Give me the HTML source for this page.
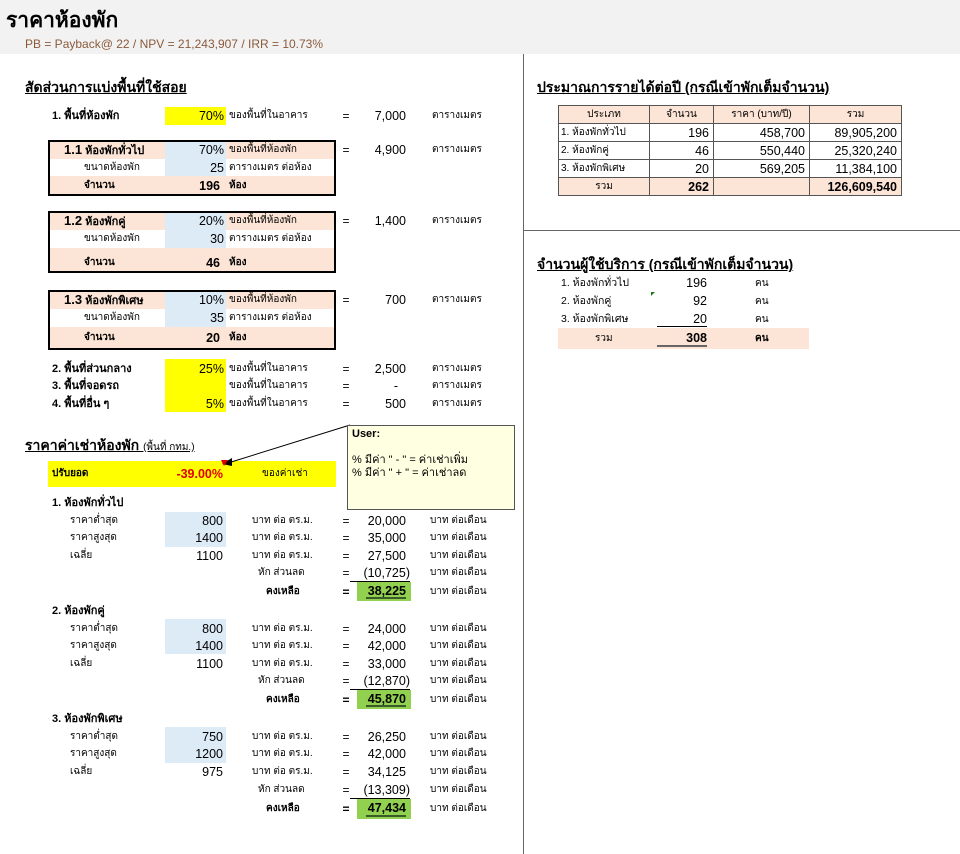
<!DOCTYPE html>
<html><head><meta charset="utf-8"><style>
body{margin:0;width:960px;height:854px;background:#fff;position:relative;overflow:hidden;font-family:"Liberation Sans","Noto Sans CJK SC",sans-serif;color:#000}
div{position:absolute;white-space:nowrap;box-sizing:border-box}
.c{height:18px;line-height:18px;font-size:10px}
.n{height:18px;line-height:18px;font-size:12.5px;text-align:right}
.b{font-weight:bold}
.h{font-size:14px;font-weight:bold;text-decoration:underline}
.pk{background:#fce4d6}
.bl{background:#ddebf7}
.yl{background:#ffff00}
.gr{background:#92d050}
.eq{font-size:12px;height:18px;line-height:18px;width:20px;text-align:center}
.box{border:2px solid #000}
td{border:1px solid #555;padding:0 4px;height:17px;font-size:12.5px;text-align:right}
</style></head><body>
<div style="left:0;top:0;width:960px;height:54px;background:#f2f2f2"></div>
<div style="left:6px;top:8px;font-size:21px;font-weight:bold;line-height:26px">ราคาห้องพัก</div>
<div style="left:25px;top:37px;font-size:12px;color:#8b5a3c">PB = Payback@ 22 / NPV = 21,243,907 / IRR = 10.73%</div>
<div style="left:523px;top:54px;width:1px;height:800px;background:#666"></div>
<div style="left:523px;top:230px;width:437px;height:1px;background:#666"></div>

<div class="h" style="left:25px;top:77px">สัดส่วนการแบ่งพื้นที่ใช้สอย</div>
<div class="c b" style="left:52px;top:107px;font-size:11px">1. พื้นที่ห้องพัก</div>
<div class="n yl" style="left:165px;top:107px;width:61px;padding-right:2px">70%</div>
<div class="c" style="left:229px;top:107px">ของพื้นที่ในอาคาร</div>
<div class="eq" style="left:336px;top:107px">=</div>
<div class="n" style="left:350px;top:107px;width:56px">7,000</div>
<div class="c" style="left:432px;top:107px">ตารางเมตร</div>

<div class="pk" style="left:49px;top:141px;width:286px;height:18px"></div>
<div class="pk" style="left:49px;top:176px;width:286px;height:19px"></div>
<div class="bl" style="left:165px;top:141px;width:61px;height:35px"></div>
<div class="box" style="left:48px;top:140px;width:288px;height:56px"></div>
<div class="c b" style="left:64px;top:141px;font-size:11px"><span style="font-size:13px">1.1</span> ห้องพักทั่วไป</div>
<div class="n" style="left:165px;top:141px;width:61px;padding-right:2px">70%</div>
<div class="c" style="left:229px;top:141px">ของพื้นที่ห้องพัก</div>
<div class="c" style="left:84px;top:159px">ขนาดห้องพัก</div>
<div class="n" style="left:165px;top:159px;width:61px;padding-right:2px">25</div>
<div class="c" style="left:229px;top:159px">ตารางเมตร ต่อห้อง</div>
<div class="c b" style="left:84px;top:177px">จำนวน</div>
<div class="n b" style="left:165px;top:177px;width:55px">196</div>
<div class="c b" style="left:229px;top:177px">ห้อง</div>
<div class="eq" style="left:336px;top:141px">=</div>
<div class="n" style="left:350px;top:141px;width:56px">4,900</div>
<div class="c" style="left:432px;top:141px">ตารางเมตร</div>

<div class="pk" style="left:49px;top:212px;width:286px;height:18px"></div>
<div class="pk" style="left:49px;top:248px;width:286px;height:24px"></div>
<div class="bl" style="left:165px;top:212px;width:61px;height:36px"></div>
<div class="box" style="left:48px;top:211px;width:288px;height:62px"></div>
<div class="c b" style="left:64px;top:212px;font-size:11px"><span style="font-size:13px">1.2</span> ห้องพักคู่</div>
<div class="n" style="left:165px;top:212px;width:61px;padding-right:2px">20%</div>
<div class="c" style="left:229px;top:212px">ของพื้นที่ห้องพัก</div>
<div class="c" style="left:84px;top:230px">ขนาดห้องพัก</div>
<div class="n" style="left:165px;top:230px;width:61px;padding-right:2px">30</div>
<div class="c" style="left:229px;top:230px">ตารางเมตร ต่อห้อง</div>
<div class="c b" style="left:84px;top:254px">จำนวน</div>
<div class="n b" style="left:165px;top:254px;width:55px">46</div>
<div class="c b" style="left:229px;top:254px">ห้อง</div>
<div class="eq" style="left:336px;top:212px">=</div>
<div class="n" style="left:350px;top:212px;width:56px">1,400</div>
<div class="c" style="left:432px;top:212px">ตารางเมตร</div>

<div class="pk" style="left:49px;top:291px;width:286px;height:18px"></div>
<div class="pk" style="left:49px;top:327px;width:286px;height:22px"></div>
<div class="bl" style="left:165px;top:291px;width:61px;height:36px"></div>
<div class="box" style="left:48px;top:290px;width:288px;height:60px"></div>
<div class="c b" style="left:64px;top:291px;font-size:11px"><span style="font-size:13px">1.3</span> ห้องพักพิเศษ</div>
<div class="n" style="left:165px;top:291px;width:61px;padding-right:2px">10%</div>
<div class="c" style="left:229px;top:291px">ของพื้นที่ห้องพัก</div>
<div class="c" style="left:84px;top:309px">ขนาดห้องพัก</div>
<div class="n" style="left:165px;top:309px;width:61px;padding-right:2px">35</div>
<div class="c" style="left:229px;top:309px">ตารางเมตร ต่อห้อง</div>
<div class="c b" style="left:84px;top:329px">จำนวน</div>
<div class="n b" style="left:165px;top:329px;width:55px">20</div>
<div class="c b" style="left:229px;top:329px">ห้อง</div>
<div class="eq" style="left:336px;top:291px">=</div>
<div class="n" style="left:350px;top:291px;width:56px">700</div>
<div class="c" style="left:432px;top:291px">ตารางเมตร</div>

<div class="yl" style="left:165px;top:359px;width:61px;height:53px"></div>
<div class="c b" style="left:52px;top:360px;font-size:11px">2. พื้นที่ส่วนกลาง</div>
<div class="n" style="left:165px;top:360px;width:61px;padding-right:2px">25%</div>
<div class="c" style="left:229px;top:360px">ของพื้นที่ในอาคาร</div>
<div class="eq" style="left:336px;top:360px">=</div>
<div class="n" style="left:350px;top:360px;width:56px">2,500</div>
<div class="c" style="left:432px;top:360px">ตารางเมตร</div>
<div class="c b" style="left:52px;top:377px;font-size:11px">3. พื้นที่จอดรถ</div>
<div class="c" style="left:229px;top:377px">ของพื้นที่ในอาคาร</div>
<div class="eq" style="left:336px;top:377px">=</div>
<div class="n" style="left:350px;top:377px;width:48px">-</div>
<div class="c" style="left:432px;top:377px">ตารางเมตร</div>
<div class="c b" style="left:52px;top:395px;font-size:11px">4. พื้นที่อื่น ๆ</div>
<div class="n" style="left:165px;top:395px;width:61px;padding-right:2px">5%</div>
<div class="c" style="left:229px;top:395px">ของพื้นที่ในอาคาร</div>
<div class="eq" style="left:336px;top:395px">=</div>
<div class="n" style="left:350px;top:395px;width:56px">500</div>
<div class="c" style="left:432px;top:395px">ตารางเมตร</div>

<div class="h" style="left:25px;top:435px">ราคาค่าเช่าห้องพัก <span style="font-size:10px;font-weight:normal;text-decoration:none">(พื้นที่ กทม.)</span></div>
<div class="yl" style="left:48px;top:461px;width:288px;height:26px"></div>
<div class="c b" style="left:52px;top:465px">ปรับยอด</div>
<div class="n b" style="left:165px;top:465px;width:58px;color:#e00000">-39.00%</div>
<div class="c" style="left:262px;top:465px">ของค่าเช่า</div>
<svg style="position:absolute;left:0;top:0" width="960" height="854"><line x1="350" y1="425" x2="228" y2="463" stroke="#000" stroke-width="1"/><polygon points="222,464 232,458 232,466" fill="#000"/><polygon points="221,460 228,460 224,466" fill="#e00000"/></svg>
<div style="left:347px;top:425px;width:168px;height:85px;background:#ffffe1;border:1px solid #555;font-size:11px;line-height:13px;padding:2px 4px;white-space:normal"><b>User:</b><br><br>% มีค่า " - " = ค่าเช่าเพิ่ม<br>% มีค่า " + " = ค่าเช่าลด</div>

<div class="c b" style="left:52px;top:494px;font-size:11px">1. ห้องพักทั่วไป</div>
<div class="bl" style="left:165px;top:512px;width:61px;height:35px"></div>
<div class="c" style="left:70px;top:512px">ราคาต่ำสุด</div><div class="n" style="left:165px;top:512px;width:58px">800</div><div class="c" style="left:252px;top:512px">บาท ต่อ ตร.ม.</div><div class="eq" style="left:336px;top:512px">=</div><div class="n" style="left:350px;top:512px;width:56px">20,000</div><div class="c" style="left:430px;top:512px">บาท ต่อเดือน</div>
<div class="c" style="left:70px;top:529px">ราคาสูงสุด</div><div class="n" style="left:165px;top:529px;width:58px">1400</div><div class="c" style="left:252px;top:529px">บาท ต่อ ตร.ม.</div><div class="eq" style="left:336px;top:529px">=</div><div class="n" style="left:350px;top:529px;width:56px">35,000</div><div class="c" style="left:430px;top:529px">บาท ต่อเดือน</div>
<div class="c" style="left:70px;top:547px">เฉลี่ย</div><div class="n" style="left:165px;top:547px;width:58px">1100</div><div class="c" style="left:252px;top:547px">บาท ต่อ ตร.ม.</div><div class="eq" style="left:336px;top:547px">=</div><div class="n" style="left:350px;top:547px;width:56px">27,500</div><div class="c" style="left:430px;top:547px">บาท ต่อเดือน</div>
<div class="c" style="left:258px;top:564px">หัก ส่วนลด</div><div class="eq" style="left:336px;top:564px">=</div><div class="n" style="left:350px;top:564px;width:60px;border-bottom:1px solid #000">(10,725)</div><div class="c" style="left:430px;top:564px">บาท ต่อเดือน</div>
<div class="gr" style="left:357px;top:582px;width:54px;height:19px"></div>
<div class="c b" style="left:266px;top:583px">คงเหลือ</div><div class="eq b" style="left:336px;top:583px">=</div><div class="n b" style="left:350px;top:582px;width:56px">38,225</div><div style="left:366px;top:597px;width:40px;height:2px;background:#3a5a2a"></div><div class="c" style="left:430px;top:583px">บาท ต่อเดือน</div>

<div class="c b" style="left:52px;top:602px;font-size:11px">2. ห้องพักคู่</div>
<div class="bl" style="left:165px;top:619px;width:61px;height:35px"></div>
<div class="c" style="left:70px;top:620px">ราคาต่ำสุด</div><div class="n" style="left:165px;top:620px;width:58px">800</div><div class="c" style="left:252px;top:620px">บาท ต่อ ตร.ม.</div><div class="eq" style="left:336px;top:620px">=</div><div class="n" style="left:350px;top:620px;width:56px">24,000</div><div class="c" style="left:430px;top:620px">บาท ต่อเดือน</div>
<div class="c" style="left:70px;top:637px">ราคาสูงสุด</div><div class="n" style="left:165px;top:637px;width:58px">1400</div><div class="c" style="left:252px;top:637px">บาท ต่อ ตร.ม.</div><div class="eq" style="left:336px;top:637px">=</div><div class="n" style="left:350px;top:637px;width:56px">42,000</div><div class="c" style="left:430px;top:637px">บาท ต่อเดือน</div>
<div class="c" style="left:70px;top:655px">เฉลี่ย</div><div class="n" style="left:165px;top:655px;width:58px">1100</div><div class="c" style="left:252px;top:655px">บาท ต่อ ตร.ม.</div><div class="eq" style="left:336px;top:655px">=</div><div class="n" style="left:350px;top:655px;width:56px">33,000</div><div class="c" style="left:430px;top:655px">บาท ต่อเดือน</div>
<div class="c" style="left:258px;top:672px">หัก ส่วนลด</div><div class="eq" style="left:336px;top:672px">=</div><div class="n" style="left:350px;top:672px;width:60px;border-bottom:1px solid #000">(12,870)</div><div class="c" style="left:430px;top:672px">บาท ต่อเดือน</div>
<div class="gr" style="left:357px;top:690px;width:54px;height:19px"></div>
<div class="c b" style="left:266px;top:691px">คงเหลือ</div><div class="eq b" style="left:336px;top:691px">=</div><div class="n b" style="left:350px;top:690px;width:56px">45,870</div><div style="left:366px;top:705px;width:40px;height:2px;background:#3a5a2a"></div><div class="c" style="left:430px;top:691px">บาท ต่อเดือน</div>

<div class="c b" style="left:52px;top:710px;font-size:11px">3. ห้องพักพิเศษ</div>
<div class="bl" style="left:165px;top:727px;width:61px;height:36px"></div>
<div class="c" style="left:70px;top:728px">ราคาต่ำสุด</div><div class="n" style="left:165px;top:728px;width:58px">750</div><div class="c" style="left:252px;top:728px">บาท ต่อ ตร.ม.</div><div class="eq" style="left:336px;top:728px">=</div><div class="n" style="left:350px;top:728px;width:56px">26,250</div><div class="c" style="left:430px;top:728px">บาท ต่อเดือน</div>
<div class="c" style="left:70px;top:745px">ราคาสูงสุด</div><div class="n" style="left:165px;top:745px;width:58px">1200</div><div class="c" style="left:252px;top:745px">บาท ต่อ ตร.ม.</div><div class="eq" style="left:336px;top:745px">=</div><div class="n" style="left:350px;top:745px;width:56px">42,000</div><div class="c" style="left:430px;top:745px">บาท ต่อเดือน</div>
<div class="c" style="left:70px;top:763px">เฉลี่ย</div><div class="n" style="left:165px;top:763px;width:58px">975</div><div class="c" style="left:252px;top:763px">บาท ต่อ ตร.ม.</div><div class="eq" style="left:336px;top:763px">=</div><div class="n" style="left:350px;top:763px;width:56px">34,125</div><div class="c" style="left:430px;top:763px">บาท ต่อเดือน</div>
<div class="c" style="left:258px;top:781px">หัก ส่วนลด</div><div class="eq" style="left:336px;top:781px">=</div><div class="n" style="left:350px;top:781px;width:60px;border-bottom:1px solid #000">(13,309)</div><div class="c" style="left:430px;top:781px">บาท ต่อเดือน</div>
<div class="gr" style="left:357px;top:799px;width:54px;height:20px"></div>
<div class="c b" style="left:266px;top:800px">คงเหลือ</div><div class="eq b" style="left:336px;top:800px">=</div><div class="n b" style="left:350px;top:799px;width:56px">47,434</div><div style="left:366px;top:815px;width:40px;height:2px;background:#3a5a2a"></div><div class="c" style="left:430px;top:800px">บาท ต่อเดือน</div>

<div class="h" style="left:537px;top:77px">ประมาณการรายได้ต่อปี (กรณีเข้าพักเต็มจำนวน)</div>
<table style="position:absolute;left:558px;top:105px;border-collapse:collapse;width:344px">
<tr class="pk"><td style="width:82px;text-align:center;font-size:10px">ประเภท</td><td style="width:55px;text-align:center;font-size:10px">จำนวน</td><td style="width:87px;text-align:center;font-size:10px">ราคา (บาท/ปี)</td><td style="text-align:center;font-size:10px">รวม</td></tr>
<tr><td style="text-align:left;font-size:10px;padding-left:2px">1. ห้องพักทั่วไป</td><td>196</td><td>458,700</td><td>89,905,200</td></tr>
<tr><td style="text-align:left;font-size:10px;padding-left:2px">2. ห้องพักคู่</td><td>46</td><td>550,440</td><td>25,320,240</td></tr>
<tr><td style="text-align:left;font-size:10px;padding-left:2px">3. ห้องพักพิเศษ</td><td>20</td><td>569,205</td><td>11,384,100</td></tr>
<tr class="pk"><td style="text-align:center;font-size:10px">รวม</td><td class="b">262</td><td></td><td class="b">126,609,540</td></tr>
</table>

<div class="h" style="left:537px;top:254px">จำนวนผู้ใช้บริการ (กรณีเข้าพักเต็มจำนวน)</div>
<div class="c" style="left:561px;top:274px;font-size:10.5px">1. ห้องพักทั่วไป</div><div class="n" style="left:650px;top:274px;width:57px">196</div><div class="c" style="left:755px;top:275px">คน</div>
<div class="c" style="left:561px;top:292px;font-size:10.5px">2. ห้องพักคู่</div><div class="n" style="left:650px;top:292px;width:57px">92</div><div class="c" style="left:755px;top:293px">คน</div>
<div style="left:651px;top:292px;width:0;height:0;border-top:4px solid #1a7a1a;border-right:4px solid transparent"></div>
<div class="c" style="left:561px;top:310px;font-size:10.5px">3. ห้องพักพิเศษ</div><div class="n" style="left:650px;top:310px;width:57px">20</div><div class="c" style="left:755px;top:311px">คน</div>
<div style="left:657px;top:326px;width:50px;height:1px;background:#000"></div>
<div class="pk" style="left:558px;top:328px;width:251px;height:21px"></div>
<div class="c" style="left:595px;top:330px">รวม</div><div class="n b" style="left:650px;top:329px;width:57px">308</div><div class="c b" style="left:755px;top:330px">คน</div>
<div style="left:657px;top:345px;width:50px;height:2px;background:#666"></div>
</body></html>
